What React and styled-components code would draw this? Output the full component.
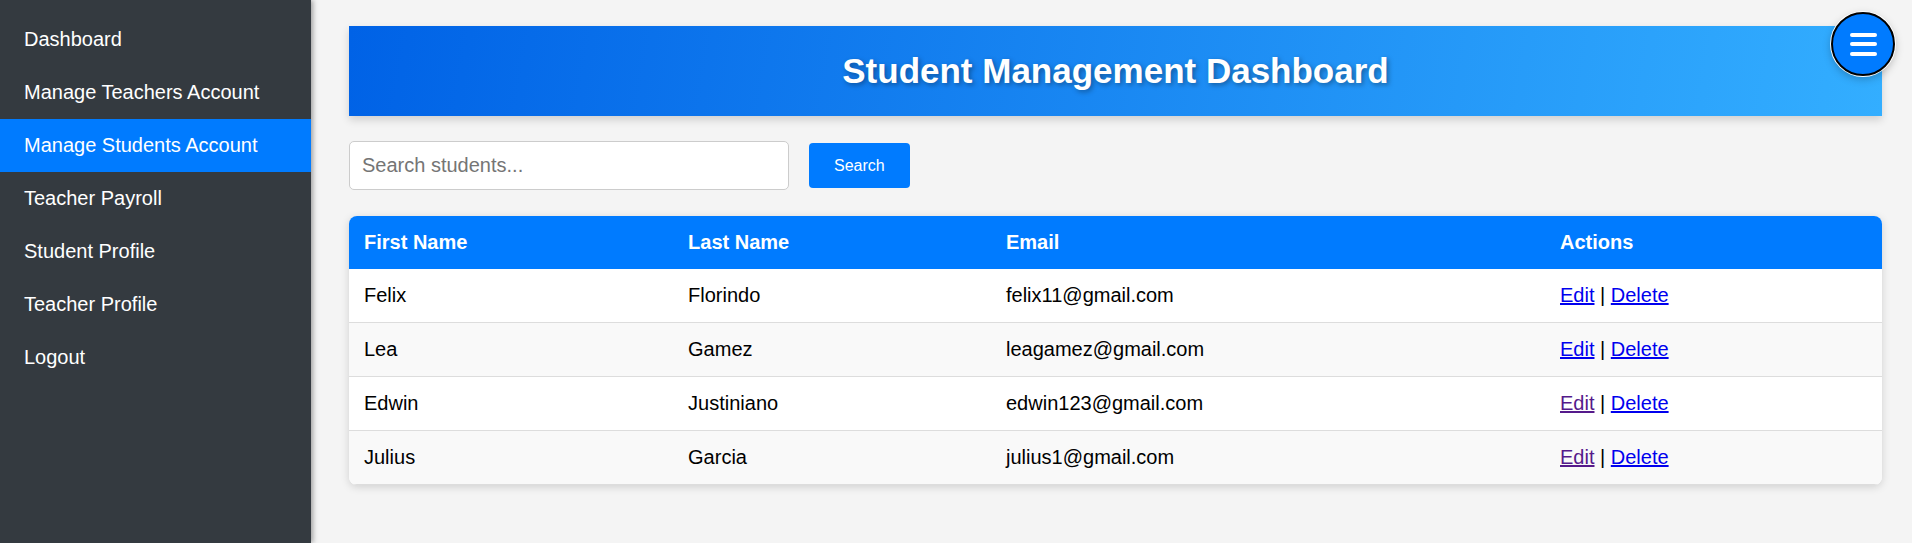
import React from "react";
import styled, { createGlobalStyle } from "styled-components";

const students = [
  { first: "Felix", last: "Florindo", email: "felix11@gmail.com", visited: false },
  { first: "Lea", last: "Gamez", email: "leagamez@gmail.com", visited: false },
  { first: "Edwin", last: "Justiniano", email: "edwin123@gmail.com", visited: true },
  { first: "Julius", last: "Garcia", email: "julius1@gmail.com", visited: true },
];

const links = [
  "Dashboard",
  "Manage Teachers Account",
  "Manage Students Account",
  "Teacher Payroll",
  "Student Profile",
  "Teacher Profile",
  "Logout",
];

const App = () => {
  return (
    <Layout>
      <GlobalStyle />
      <Sidebar>
        {links.map((label) => (
          <NavItem key={label} $active={label === "Manage Students Account"}>
            {label}
          </NavItem>
        ))}
      </Sidebar>
      <Main>
        <Banner>
          <h1>Student Management Dashboard</h1>
        </Banner>
        <SearchBar>
          <SearchInput placeholder="Search students..." />
          <SearchButton>Search</SearchButton>
        </SearchBar>
        <Table>
          <thead>
            <tr>
              <Th $w="21.14%">First Name</Th>
              <Th $w="20.74%">Last Name</Th>
              <Th $w="36.14%">Email</Th>
              <Th $w="21.98%">Actions</Th>
            </tr>
          </thead>
          <tbody>
            {students.map((s) => (
              <Row key={s.email}>
                <Td>{s.first}</Td>
                <Td>{s.last}</Td>
                <Td>{s.email}</Td>
                <Td>
                  <ActionLink href="#" $visited={s.visited}>Edit</ActionLink>
                  {" | "}
                  <ActionLink href="#">Delete</ActionLink>
                </Td>
              </Row>
            ))}
          </tbody>
        </Table>
      </Main>
      <MenuButton aria-label="menu">
        <span />
        <span />
        <span />
      </MenuButton>
    </Layout>
  );
};

export default App;

const GlobalStyle = createGlobalStyle`
  * { box-sizing: border-box; }
  body {
    margin: 0;
    font-family: "Liberation Sans", Arial, sans-serif;
    background: #f4f4f4;
  }
`;

const Layout = styled.div`
  display: flex;
  min-height: 100vh;
`;

const Sidebar = styled.nav`
  width: 311px;
  flex-shrink: 0;
  min-height: 100vh;
  background: #343a40;
  padding-top: 13px;
  display: flex;
  flex-direction: column;
  box-shadow: 2px 0 5px rgba(0, 0, 0, 0.35);
  position: relative;
  z-index: 1;
`;

const NavItem = styled.a`
  display: block;
  padding: 15px 24px;
  font-size: 20px;
  line-height: 23px;
  color: #ffffff;
  text-decoration: none;
  background: ${(p) => (p.$active ? "#007bff" : "transparent")};
`;

const Main = styled.main`
  flex: 1;
  padding: 26px 30px 30px 38px;
`;

const Banner = styled.header`
  height: 90px;
  display: flex;
  align-items: center;
  justify-content: center;
  background: linear-gradient(100deg, #0062e6 0%, #33aeff 100%);
  box-shadow: 0 4px 8px rgba(0, 0, 0, 0.15);

  h1 {
    margin: 0;
    color: #ffffff;
    font-size: 35px;
    font-weight: 700;
    text-shadow: 2px 2px 5px rgba(0, 0, 0, 0.35);
  }
`;

const SearchBar = styled.div`
  display: flex;
  align-items: center;
  gap: 20px;
  margin-top: 25px;
`;

const SearchInput = styled.input`
  width: 440px;
  padding: 12px;
  font-size: 20px;
  line-height: 23px;
  font-family: "Liberation Sans", Arial, sans-serif;
  border: 1px solid #cccccc;
  border-radius: 5px;
  background: #ffffff;

  &::placeholder {
    color: #757575;
  }
`;

const SearchButton = styled.button`
  padding: 13px 25px;
  font-size: 16px;
  line-height: 19px;
  font-family: "Liberation Sans", Arial, sans-serif;
  color: #ffffff;
  background: #007bff;
  border: none;
  border-radius: 4px;
  cursor: pointer;
`;

const Table = styled.table`
  width: 100%;
  margin-top: 26px;
  border-collapse: collapse;
  table-layout: fixed;
  background: #ffffff;
  border-radius: 8px;
  overflow: hidden;
  box-shadow: 0 2px 8px rgba(0, 0, 0, 0.15);
`;

const Th = styled.th`
  width: ${(p) => p.$w};
  padding: 15px;
  text-align: left;
  font-size: 20px;
  line-height: 23px;
  font-weight: 700;
  color: #ffffff;
  background: #007bff;
`;

const Row = styled.tr`
  &:nth-child(even) {
    background: #f9f9f9;
  }
`;

const Td = styled.td`
  padding: 15px;
  font-size: 20px;
  line-height: 23px;
  color: #000000;
  border-bottom: 1px solid #dddddd;
`;

const ActionLink = styled.a`
  color: ${(p) => (p.$visited ? "#551a8b" : "#0000ee")};
  text-decoration: underline;
`;

const MenuButton = styled.button`
  position: fixed;
  top: 12px;
  right: 17px;
  width: 64px;
  height: 64px;
  border-radius: 50%;
  border: 2px solid #000000;
  background: #007bff;
  box-shadow: 0 0 0 1px #ffffff, 0 3px 8px rgba(0, 0, 0, 0.25);
  display: flex;
  flex-direction: column;
  align-items: center;
  justify-content: center;
  gap: 5.5px;
  padding: 0;
  cursor: pointer;
  z-index: 10;

  span {
    display: block;
    width: 27px;
    height: 4px;
    border-radius: 2px;
    background: #ffffff;
  }
`;
